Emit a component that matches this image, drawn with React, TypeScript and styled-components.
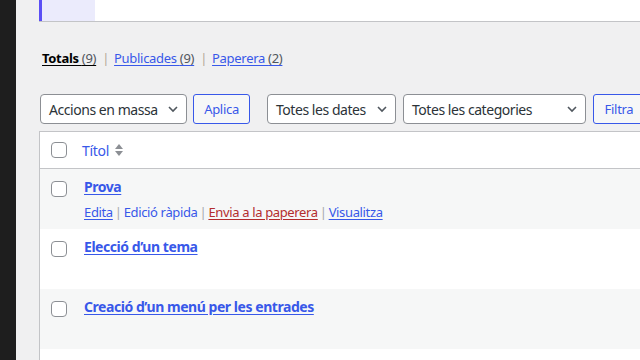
import * as React from "react";
import styled, { createGlobalStyle } from "styled-components";

const GlobalStyle = createGlobalStyle`
  html, body {
    margin: 0;
    padding: 0;
    background: #f0f0f1;
    font-family: "Noto Sans", "Open Sans", sans-serif;
    color: #3c434a;
  }
  * { box-sizing: border-box; }
`;

const LINK = "#3858e9";

const Page = styled.div`
  display: flex;
  width: 640px;
  height: 360px;
  overflow: hidden;
`;

const Sidebar = styled.div`
  width: 16px;
  flex: none;
  background: #1e1e1e;
`;

const Main = styled.div`
  flex: 1;
  min-width: 0;
  padding-left: 23px;
  display: flex;
  flex-direction: column;
`;

const Notice = styled.div`
  height: 22px;
  flex: none;
  background: #fff;
  border-bottom: 1px solid #c3c4c7;
  display: flex;
`;

const NoticeMark = styled.div`
  width: 56px;
  border-left: 3px solid #5b4ff5;
  background: #ebebfc;
`;

const Views = styled.ul`
  list-style: none;
  margin: 26px 0 0 3px;
  padding: 0;
  display: flex;
  align-items: center;
  font-size: 13px;
  letter-spacing: -0.3px;
  line-height: 20px;
  height: 20px;
`;

const ViewItem = styled.li`
  display: flex;
  align-items: center;
  white-space: nowrap;
`;

const ViewLink = styled.a<{ $current?: boolean }>`
  color: ${(p) => (p.$current ? "#000" : LINK)};
  font-weight: ${(p) => (p.$current ? 700 : 400)};
  text-decoration: underline;
  text-underline-offset: 2px;
`;

const Count = styled.span`
  color: #50575e;
  font-weight: 400;
`;

const Sep = styled.span`
  color: #b5a999;
  margin: 0 5px 0 6px;
`;

const TableNav = styled.div`
  display: flex;
  align-items: center;
  gap: 7px;
  margin: 26px 0 0 1px;
  height: 30px;
  flex: none;
`;

const Group = styled.div<{ $gap?: number }>`
  display: flex;
  gap: 6px;
  margin-right: ${(p) => p.$gap ?? 0}px;
`;

const SelectBox = styled.div<{ $w: number }>`
  width: ${(p) => p.$w}px;
  height: 30px;
  border: 1px solid #8c8f94;
  border-radius: 4px;
  background: #fff;
  display: flex;
  align-items: center;
  justify-content: space-between;
  padding: 0 7px 0 8px;
  font-size: 14px;
  letter-spacing: -0.45px;
  color: #2c3338;
  white-space: nowrap;
  flex: none;
`;

const Chevron = () => (
  <svg width="12" height="12" viewBox="0 0 12 12">
    <path d="M2 4l4 4 4-4" fill="none" stroke="#50575e" strokeWidth="1.6" />
  </svg>
);

const Button = styled.div<{ $w: number }>`
  width: ${(p) => p.$w}px;
  height: 30px;
  border: 1px solid ${LINK};
  border-radius: 3px;
  background: #f6f7f7;
  color: ${LINK};
  font-size: 13px;
  letter-spacing: -0.3px;
  display: flex;
  align-items: center;
  justify-content: center;
  flex: none;
`;

const Table = styled.div`
  margin-top: 7px;
  border: 1px solid #c3c4c7;
  border-right: none;
  background: #fff;
  flex: none;
`;

const HeadRow = styled.div`
  height: 37px;
  display: flex;
  align-items: center;
  border-bottom: 1px solid #c3c4c7;
  padding-left: 11px;
`;

const Row = styled.div<{ $alt?: boolean }>`
  height: 60px;
  display: flex;
  align-items: flex-start;
  padding: 8px 0 0 11px;
  background: ${(p) => (p.$alt ? "#f6f7f7" : "#fff")};
`;

const Check = styled.span`
  width: 16px;
  height: 16px;
  border: 1px solid #8c8f94;
  border-radius: 4px;
  background: #fff;
  flex: none;
`;

const RowCheck = styled(Check)`
  margin-top: 4px;
`;

const HeadTitle = styled.a`
  margin-left: 15px;
  color: ${LINK};
  font-size: 14px;
  letter-spacing: -0.3px;
  text-decoration: none;
  display: flex;
  align-items: center;
  gap: 6px;
`;

const SortIcon = () => (
  <svg width="8" height="16" viewBox="0 0 8 16">
    <path d="M4 2L8 7H0z" fill="#8c8f94" />
    <path d="M4 14L8 9H0z" fill="#8c8f94" />
  </svg>
);

const Cell = styled.div`
  margin-left: 17px;
  display: flex;
  flex-direction: column;
`;

const PostTitle = styled.a`
  color: ${LINK};
  font-size: 14px;
  font-weight: 700;
  letter-spacing: -0.45px;
  text-decoration: underline;
  text-underline-offset: 2px;
  line-height: 20px;
  white-space: nowrap;
`;

const Actions = styled.div`
  margin-top: 6px;
  font-size: 13px;
  letter-spacing: -0.35px;
  line-height: 18px;
  white-space: nowrap;
  display: flex;
`;

const ActionLink = styled.a<{ $danger?: boolean; $plain?: boolean }>`
  color: ${(p) => (p.$danger ? "#b32d2e" : LINK)};
  text-decoration: ${(p) => (p.$plain ? "none" : "underline")};
  text-underline-offset: 2px;
`;

const ActionSep = styled.span`
  color: #a7aaad;
  margin: 0 2px;
`;

const posts = [
  { title: "Prova", actions: true },
  { title: "Elecció d’un tema" },
  { title: "Creació d’un menú per les entrades" },
  { title: "Personalització de la pàgina d’inici" },
];

export default function App() {
  return (
    <Page>
      <GlobalStyle />
      <Sidebar />
      <Main>
        <Notice>
          <NoticeMark />
        </Notice>
        <Views>
          <ViewItem>
            <ViewLink $current>
              Totals <Count>(9)</Count>
            </ViewLink>
            <Sep>|</Sep>
          </ViewItem>
          <ViewItem>
            <ViewLink>
              Publicades <Count>(9)</Count>
            </ViewLink>
            <Sep>|</Sep>
          </ViewItem>
          <ViewItem>
            <ViewLink>
              Paperera <Count>(2)</Count>
            </ViewLink>
          </ViewItem>
        </Views>
        <TableNav>
          <Group $gap={10}>
            <SelectBox $w={147}>
              Accions en massa <Chevron />
            </SelectBox>
            <Button $w={57}>Aplica</Button>
          </Group>
          <SelectBox $w={129}>
            Totes les dates <Chevron />
          </SelectBox>
          <SelectBox $w={183}>
            Totes les categories <Chevron />
          </SelectBox>
          <Button $w={52}>Filtra</Button>
        </TableNav>
        <Table>
          <HeadRow>
            <Check />
            <HeadTitle>
              Títol <SortIcon />
            </HeadTitle>
          </HeadRow>
          {posts.map((p, i) => (
            <Row key={p.title} $alt={i % 2 === 0}>
              <RowCheck />
              <Cell>
                <PostTitle>{p.title}</PostTitle>
                {p.actions && (
                  <Actions>
                    <ActionLink>Edita</ActionLink>
                    <ActionSep>|</ActionSep>
                    <ActionLink $plain>Edició ràpida</ActionLink>
                    <ActionSep>|</ActionSep>
                    <ActionLink $danger>Envia a la paperera</ActionLink>
                    <ActionSep>|</ActionSep>
                    <ActionLink>Visualitza</ActionLink>
                  </Actions>
                )}
              </Cell>
            </Row>
          ))}
        </Table>
      </Main>
    </Page>
  );
}
